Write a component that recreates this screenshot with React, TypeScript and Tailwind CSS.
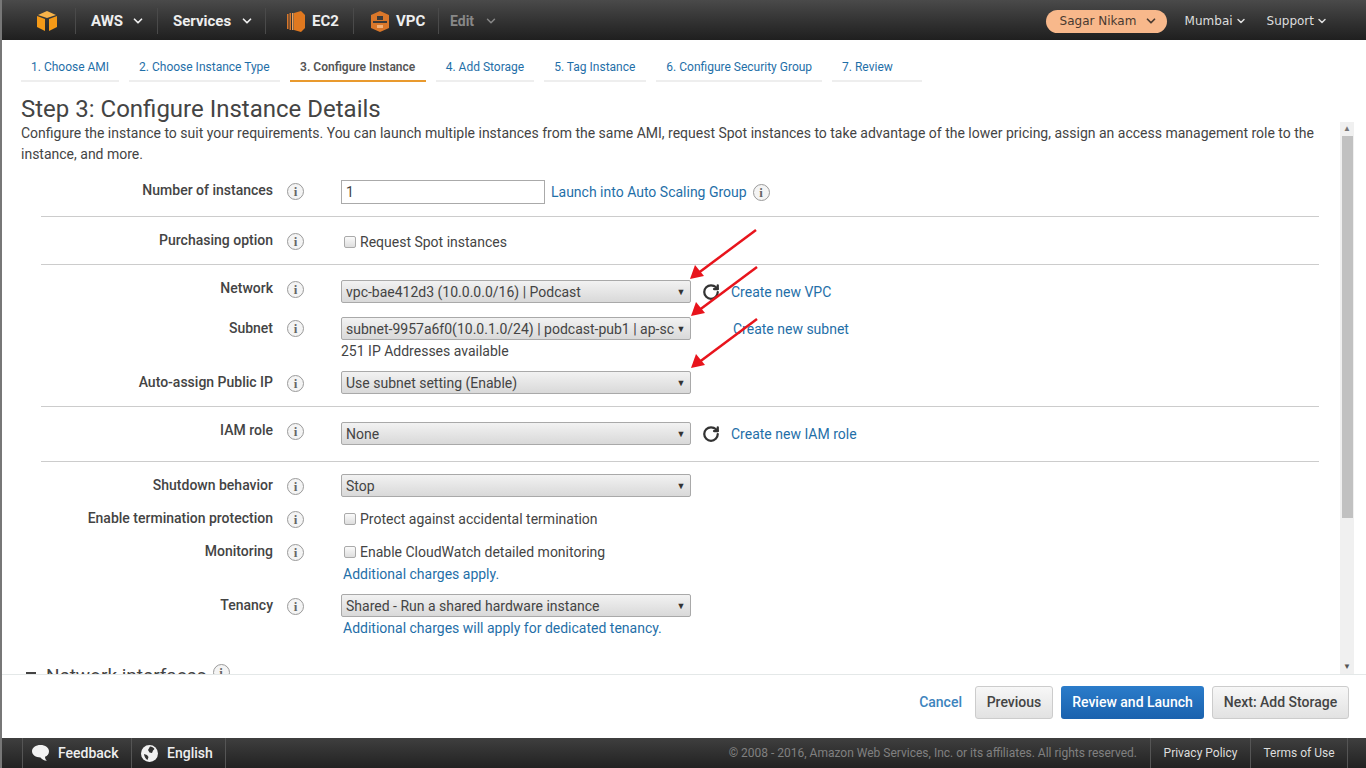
import React from 'react';
import { ChevronDown, RotateCw } from 'lucide-react';

const tabs = ['1. Choose AMI', '2. Choose Instance Type', '3. Configure Instance', '4. Add Storage', '5. Tag Instance', '6. Configure Security Group', '7. Review'];

const InfoIcon = () => (
    <span className="w-[17px] h-[17px] rounded-full border border-[#9a9a9a] bg-[#f4f4f4] flex items-center justify-center font-['Liberation_Serif',serif] text-[13px] font-bold text-[#666] leading-none">i</span>
);

const Select = ({ value }: { value: string }) => (
    <div className="relative w-[350px] h-[23px] border border-[#a9a9a9] rounded-[2px] bg-gradient-to-b from-[#f2f2f2] to-[#d9d9d9] pl-1 pr-5 text-[14px] leading-[22px] text-[#444] overflow-hidden whitespace-nowrap">
        {value}
        <span className="absolute right-0 top-0 h-full w-[18px] text-[9px] text-[#333] flex items-center justify-center">▼</span>
    </div>
);

const Row = ({ label, className, labelClass, children }: { label: string; className?: string; labelClass?: string; children: React.ReactNode }) => (
    <div className={`flex items-start ${className || ''}`}>
        <div className={`w-[232px] text-right text-[14px] leading-[20px] font-medium text-[#444] shrink-0 ${labelClass || ''}`}>{label}</div>
        <div className="w-[68px] pl-[14px] pt-[3px] shrink-0"><InfoIcon /></div>
        <div className="flex-1 min-w-0">{children}</div>
    </div>
);

const Check = ({ label }: { label: string }) => (
    <label className="flex items-center text-[14px] leading-[20px] text-[#444] pl-[3px] pt-[1px]">
        <span className="w-[12px] h-[12px] mr-[4px] border border-[#aaa] rounded-[2px] bg-gradient-to-b from-[#fafafa] to-[#dedede]"></span>
        {label}
    </label>
);

const Arrow = ({ x, y }: { x: number; y: number }) => (
    <svg className="absolute" style={{ left: x, top: y }} width="70" height="52" viewBox="0 0 70 52">
        <line x1="67" y1="2" x2="8" y2="46" stroke="#e8141c" strokeWidth="2.5" />
        <polygon points="1,51 6,37 15,48" fill="#e8141c" />
    </svg>
);

const Logo = () => (
    <svg width="22" height="22" viewBox="0 0 22 22">
        <polygon points="11,1 20,5 11,8 2,5" fill="#f7b34a" />
        <polygon points="1,6 9,9 9,21 1,17" fill="#f59a17" />
        <polygon points="21,6 13,9 13,21 21,17" fill="#f59a17" />
    </svg>
);

const Ec2Icon = () => (
    <svg width="18" height="21" viewBox="0 0 18 21">
        <polygon points="7,2 14,0 18,4 18,17 14,21 7,19" fill="#e0781f" />
        <rect x="0" y="3" width="1.5" height="15" fill="#d9772a" />
        <rect x="2.5" y="2" width="1.5" height="17" fill="#d9772a" />
        <rect x="5" y="2" width="1.5" height="17" fill="#f1a35c" />
    </svg>
);

const VpcIcon = () => (
    <svg width="18" height="21" viewBox="0 0 18 21">
        <polygon points="9,0 18,4 18,17 9,21 0,17 0,4" fill="#d9772a" />
        <rect x="6" y="5" width="6" height="4" fill="#3a3a3a" />
        <rect x="2" y="10" width="14" height="2" fill="#3a3a3a" />
        <rect x="6" y="14" width="6" height="3" fill="#f1b27a" />
    </svg>
);

const FeedbackIcon = () => (
    <svg width="17" height="16" viewBox="0 0 17 16">
        <path d="M8.5 0C13.2 0 17 2.7 17 6.2c0 2.7-1.6 4.7-4 5.6 0 1.5.6 2.9 1.8 4-2.7-.3-4.9-1.4-6.3-3.4C3.800 12.400 0 9.700 0 6.200 0 2.700 3.800 0 8.500 0z" fill="#f2f2f2" />
    </svg>
);

const GlobeIcon = () => (
    <svg width="17" height="17" viewBox="0 0 17 17">
        <circle cx="8.5" cy="8.5" r="8.5" fill="#f2f2f2" />
        <path d="M9 1.500c2 .2 3.500 1.200 4.500 2.500l-1.500 1.500-1 2.500-2.500-.5-1.500-2.500zM3 9l3 1 1.500 2-1 3C4.500 14 3.200 11.500 3 9z" fill="#333" />
    </svg>
);

const Divider = () => <span className="w-px h-[26px] bg-[#4a4a4a]"></span>;

export default function App() {
    return (
        <div className="w-[1366px] h-[768px] flex flex-col overflow-hidden bg-white border-l-2 border-[#777] font-['Roboto',sans-serif]">
            <header className="h-[40px] shrink-0 flex items-center pt-[2px] bg-gradient-to-b from-[#4a4a4a] to-[#1f1f1f] text-white">
                <div className="w-[73px] pl-[34px] flex items-center"><Logo /></div>
                <Divider />
                <div className="flex items-center w-[81px] pl-[15px] font-bold text-[15px] text-[#eee]">AWS<ChevronDown className="w-[14px] h-[14px] ml-[8px]" strokeWidth={3} /></div>
                <Divider />
                <div className="flex items-center w-[107px] pl-[15px] font-bold text-[15px] text-[#eee]">Services<ChevronDown className="w-[14px] h-[14px] ml-[9px]" strokeWidth={3} /></div>
                <Divider />
                <div className="flex items-center w-[87px] pl-[21px] gap-[7px] font-bold text-[15px] text-[#eee]"><Ec2Icon />EC2</div>
                <Divider />
                <div className="flex items-center w-[84px] pl-[17px] gap-[7px] font-bold text-[15px] text-[#eee]"><VpcIcon />VPC</div>
                <Divider />
                <div className="flex items-center pl-[11px] font-bold text-[14px] text-[#888]">Edit<ChevronDown className="w-[14px] h-[14px] ml-[10px]" strokeWidth={2.5} /></div>
                <div className="ml-auto flex items-center font-['DejaVu_Sans',sans-serif] text-[12px] text-[#ddd]">
                    <div className="h-[23px] w-[121px] rounded-full bg-[#f8b88b] text-[#4a3a30] flex items-center justify-between pl-[14px] pr-[9px]">Sagar Nikam<ChevronDown className="w-[14px] h-[14px]" strokeWidth={3} /></div>
                    <span className="ml-[10px] mr-[8px]"><Divider /></span>
                    <div className="flex items-center">Mumbai<ChevronDown className="w-3 h-3 ml-[2px]" strokeWidth={3} /></div>
                    <span className="mx-[10px]"><Divider /></span>
                    <div className="flex items-center mr-[38px]">Support<ChevronDown className="w-3 h-3 ml-[2px]" strokeWidth={3} /></div>
                </div>
            </header>

            <div className="flex-1 min-h-0 relative flex flex-col">
                <nav className="h-[42px] shrink-0 flex pl-[19px] gap-[10px] pt-[13px] text-[12px]">
                    {tabs.map((t, i) => (
                        <div key={t} className={`h-[29px] leading-[28px] border-b-2 ${i === 2 ? 'w-[136px] text-center border-[#e99a2e] font-semibold text-[#555]' : i === 6 ? 'w-[90px] pl-[10px] border-[#eeeeee] text-[#1f6fa8]' : i === 4 ? 'pl-[10px] pr-[11px] border-[#eeeeee] text-[#1f6fa8]' : 'px-[10px] border-[#eeeeee] text-[#1f6fa8]'}`}>{t}</div>
                    ))}
                </nav>

                <div className="flex-1 min-h-0 flex overflow-hidden">
                    <main className="w-[1336px] shrink-0 overflow-hidden pl-[19px] pr-[19px]">
                        <h1 className="mt-[13px] text-[24px] leading-[28px] text-[#444]">Step 3: Configure Instance Details</h1>
                        <p className="text-[14px] leading-[21px] text-[#444]">Configure the instance to suit your requirements. You can launch multiple instances from the same AMI, request Spot instances to take advantage of the lower pricing, assign an access management role to the instance, and more.</p>

                        <div className="ml-[20px]">
                            <Row label="Number of instances" className="mt-[15px] h-[36px]">
                                <div className="flex items-center">
                                    <div className="w-[204px] h-[24px] border border-[#aaa] text-[14px] leading-[22px] pl-1 text-[#444]">1</div>
                                    <span className="ml-[6px] text-[14px] text-[#1f6fa8]">Launch into Auto Scaling Group</span>
                                    <span className="ml-[6px]"><InfoIcon /></span>
                                </div>
                            </Row>
                            <div className="border-t border-[#ccc]"></div>
                            <Row label="Purchasing option" className="pt-[13px] h-[47px]"><div className="pt-[1px]"><Check label="Request Spot instances" /></div></Row>
                            <div className="border-t border-[#ccc]"></div>
                            <Row label="Network" className="pt-[13px] h-[52px]">
                                <div className="flex items-center pt-[2px]">
                                    <Select value="vpc-bae412d3 (10.0.0.0/16) | Podcast" />
                                    <RotateCw className="ml-[11px] w-[18px] h-[18px] text-[#333]" strokeWidth={3} />
                                    <span className="ml-[11px] mt-[2px] text-[14px] text-[#1f6fa8]">Create new VPC</span>
                                </div>
                            </Row>
                            <Row label="Subnet" labelClass="pt-[1px]" className="h-[55px]">
                                <div className="flex items-center">
                                    <Select value="subnet-9957a6f0(10.0.1.0/24) | podcast-pub1 | ap-sc" />
                                    <span className="ml-[42px] mt-[2px] text-[14px] text-[#1f6fa8]">Create new subnet</span>
                                </div>
                                <div className="text-[14px] leading-[20px] text-[#444] mt-[1px]">251 IP Addresses available</div>
                            </Row>
                            <Row label="Auto-assign Public IP" className="h-[34px]"><div className="-mt-px"><Select value="Use subnet setting (Enable)" /></div></Row>
                            <div className="border-t border-[#ccc]"></div>
                            <Row label="IAM role" className="pt-[13px] h-[54px]">
                                <div className="flex items-center pt-[2px]">
                                    <Select value="None" />
                                    <RotateCw className="ml-[11px] w-[18px] h-[18px] text-[#333]" strokeWidth={3} />
                                    <span className="ml-[11px] mt-[2px] text-[14px] text-[#1f6fa8]">Create new IAM role</span>
                                </div>
                            </Row>
                            <div className="border-t border-[#ccc]"></div>
                            <Row label="Shutdown behavior" className="pt-[13px] h-[46px]"><div className="-mt-px"><Select value="Stop" /></div></Row>
                            <Row label="Enable termination protection" className="h-[33px]"><Check label="Protect against accidental termination" /></Row>
                            <Row label="Monitoring" className="h-[54px]">
                                <Check label="Enable CloudWatch detailed monitoring" />
                                <div className="text-[14px] leading-[20px] text-[#1f6fa8] pl-[2px] mt-[2px]">Additional charges apply.</div>
                            </Row>
                            <Row label="Tenancy" className="h-[69px]">
                                <div className="-mt-px"><Select value="Shared - Run a shared hardware instance" /></div>
                                <div className="text-[14px] leading-[20px] text-[#1f6fa8] pl-[2px] mt-[1px]">Additional charges will apply for dedicated tenancy.</div>
                            </Row>
                        </div>
                        <div className="flex items-center h-[24px] text-[19px] text-[#444]">
                            <span className="w-[10px] h-[2px] bg-[#444] ml-[5px] mr-[10px] -mt-[6px]"></span>Network interfaces
                            <span className="ml-[6px] -mt-[8px]"><InfoIcon /></span>
                        </div>
                    </main>
                    <div className="w-[14px] ml-[2px] mt-[40px] shrink-0 bg-[#f0f0f0] flex flex-col items-center">
                        <span className="h-[14px] text-[8px] leading-[14px] text-[#777]">▲</span>
                        <div className="w-[11px] h-[382px] bg-[#c1c1c1]"></div>
                        <span className="mt-auto h-[14px] text-[8px] leading-[14px] text-[#555]">▼</span>
                    </div>
                </div>

                <div className="h-[64px] shrink-0 border-t border-[#e4e8e8] flex items-center justify-end pr-[17px] pb-[8px] text-[14px] font-medium">
                    <span className="text-[#3d84bd] mr-[13px]">Cancel</span>
                    <div className="h-[33px] w-[78px] border border-[#ccc] rounded-[3px] bg-gradient-to-b from-[#f7f7f7] to-[#e2e2e2] text-[#444] flex items-center justify-center">Previous</div>
                    <div className="ml-[8px] h-[33px] w-[143px] rounded-[3px] bg-gradient-to-b from-[#2b7cca] to-[#1a62ae] text-white flex items-center justify-center">Review and Launch</div>
                    <div className="ml-[8px] h-[33px] w-[137px] border border-[#ccc] rounded-[3px] bg-gradient-to-b from-[#f7f7f7] to-[#e2e2e2] text-[#444] flex items-center justify-center">Next: Add Storage</div>
                </div>

                <Arrow x={687} y={188} />
                <Arrow x={688} y={225} />
                <Arrow x={688} y={277} />
            </div>

            <footer className="h-[30px] shrink-0 flex items-center bg-gradient-to-b from-[#3f3f3f] to-[#222] text-[14px]">
                <span className="ml-[20px] h-full w-px bg-[#555]"></span>
                <div className="w-[108px] flex items-center pl-[9px] gap-[9px] font-medium text-[#eee]"><FeedbackIcon />Feedback</div>
                <span className="h-full w-px bg-[#555]"></span>
                <div className="w-[93px] flex items-center pl-[9px] gap-[9px] font-medium text-[#eee]"><GlobeIcon />English</div>
                <span className="h-full w-px bg-[#555]"></span>
                <div className="ml-auto flex items-center h-full text-[12px]">
                    <span className="text-[#808080] mr-[13px]">© 2008 - 2016, Amazon Web Services, Inc. or its affiliates. All rights reserved.</span>
                    <span className="h-full w-px bg-[#555]"></span>
                    <span className="w-[99px] text-center text-[#ddd]">Privacy Policy</span>
                    <span className="h-full w-px bg-[#555]"></span>
                    <span className="w-[96px] text-center text-[#ddd]">Terms of Use</span>
                    <span className="h-full w-px bg-[#555]"></span>
                    <span className="w-[18px]"></span>
                </div>
            </footer>
        </div>
    );
}
